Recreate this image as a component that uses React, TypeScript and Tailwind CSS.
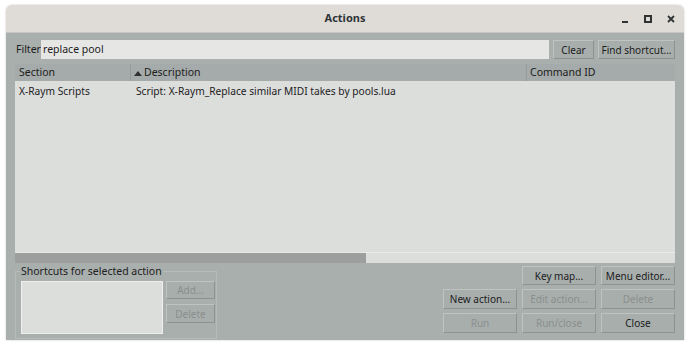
import React from "react";

const Btn = ({ label, disabled, className = "" }: { label: string; disabled?: boolean; className?: string }) => (
  <div
    className={`flex items-center justify-center whitespace-nowrap bg-[#a8aeac] border border-t-[#bfc4c2] border-l-[#bfc4c2] border-b-[#8d9290] border-r-[#8d9290] text-[10px] leading-none ${
      disabled ? "text-[#8a8f8d]" : "text-[#1c1c1c]"
    } ${className}`}
  >
    {label}
  </div>
);

export default function App() {
  return (
    <div className="w-[690px] h-[345px] bg-white pt-[5px] px-[6px] pb-[5px]" style={{ fontFamily: '"Noto Sans", sans-serif' }}>
      <div className="flex flex-col h-full rounded-t-[6px] overflow-hidden shadow-[0_0_2px_rgba(0,0,0,0.25)]">
        {/* title bar */}
        <div className="relative shrink-0 h-[28px] bg-[#dfdcd8] flex items-center justify-center border-b border-[#c8c6c2]">
          <span className="text-[11px] font-bold text-[#2e3436]">Actions</span>
          <div className="absolute right-[8px] top-0 h-full flex items-center gap-[13px] text-[#2e3436]">
            <svg width="10" height="10" viewBox="0 0 10 10"><rect x="2" y="7" width="6" height="2" fill="#2e3436" /></svg>
            <svg width="10" height="10" viewBox="0 0 10 10"><rect x="2" y="2" width="6" height="6" fill="none" stroke="#2e3436" strokeWidth="2" /></svg>
            <svg width="10" height="10" viewBox="0 0 10 10"><path d="M2 2 L8 8 M8 2 L2 8" stroke="#2e3436" strokeWidth="1.8" /></svg>
          </div>
        </div>
        {/* body */}
        <div className="flex-1 min-h-0 bg-[#a9afad] flex flex-col pl-[9px] pr-[9px] pt-[7px] text-[#1c1c1c] text-[10px]">
          {/* filter row */}
          <div className="flex shrink-0 items-center h-[19px]">
            <span className="w-[26px] pl-[1px] text-[10.5px] text-[#202020]">Filter</span>
            <div className="flex-1 h-full bg-[#e6e6e5] flex items-center pl-[2px] text-[10.5px]">replace pool</div>
            <Btn label="Clear" className="ml-[4px] w-[41px] h-full" />
            <Btn label="Find shortcut..." className="ml-[4px] w-[77px] h-full" />
          </div>
          {/* list */}
          <div className="mt-[5px] shrink-0 h-[199px] flex flex-col bg-[#dcdedc]">
            <div className="flex h-[17px] bg-[#a5abaa] items-center text-[10.5px] text-[#202020]">
              <div className="w-[116px] pl-[4px] border-r border-[#969c9a] h-full flex items-center">Section</div>
              <div className="w-[396px] pl-[2px] h-full flex items-center border-r border-[#969c9a]">
                <svg width="10" height="8" viewBox="0 0 10 8" className="mr-[1px]"><path d="M1 7 L5 2 L9 7 Z" fill="#303030" /></svg>
                Description
              </div>
              <div className="flex-1 pl-[3px] h-full flex items-center">Command ID</div>
            </div>
            <div className="flex-1">
              <div className="flex h-[20px] items-center mt-[1px] text-[10.2px]">
                <div className="w-[117px] pl-[4px]">X-Raym Scripts</div>
                <div className="pl-[4px]">Script: X-Raym_Replace similar MIDI takes by pools.lua</div>
              </div>
            </div>
            <div className="h-[11px] flex bg-[#dcdedc] border-t border-[#e8e9e8]">
              <div className="w-[351px] h-full bg-[#9d9f9e]" />
            </div>
          </div>
          {/* bottom */}
          <div className="flex mt-[2px] flex-1">
            <div className="relative w-[202px] h-[68px] border border-[#b7bcba] mt-[6px]">
              <span className="absolute -top-[8px] left-[4px] px-[1px] bg-[#a9afad] text-[10.5px] leading-[14px] text-[#202020]">Shortcuts for selected action</span>
              <div className="flex gap-[3px] pl-[5px] pt-[9px]">
                <div className="w-[142px] h-[53px] bg-[#dcdedc] border border-[#eeefee]" />
                <div className="flex flex-col gap-[5px]">
                  <Btn label="Add..." disabled className="w-[49px] h-[18px]" />
                  <Btn label="Delete" disabled className="w-[49px] h-[19px]" />
                </div>
              </div>
            </div>
            <div className="flex-1 flex flex-col items-end gap-[4px] pt-[1px]">
              <div className="flex gap-[5px]">
                <Btn label="Key map..." className="w-[74px] h-[19px]" />
                <Btn label="Menu editor..." className="w-[74px] h-[19px]" />
              </div>
              <div className="flex gap-[5px]">
                <Btn label="New action..." className="w-[74px] h-[20px]" />
                <Btn label="Edit action..." disabled className="w-[74px] h-[20px]" />
                <Btn label="Delete" disabled className="w-[74px] h-[20px]" />
              </div>
              <div className="flex gap-[5px]">
                <Btn label="Run" disabled className="w-[74px] h-[20px]" />
                <Btn label="Run/close" disabled className="w-[74px] h-[20px]" />
                <Btn label="Close" className="w-[74px] h-[20px]" />
              </div>
            </div>
          </div>
        </div>
      </div>
    </div>
  );
}
